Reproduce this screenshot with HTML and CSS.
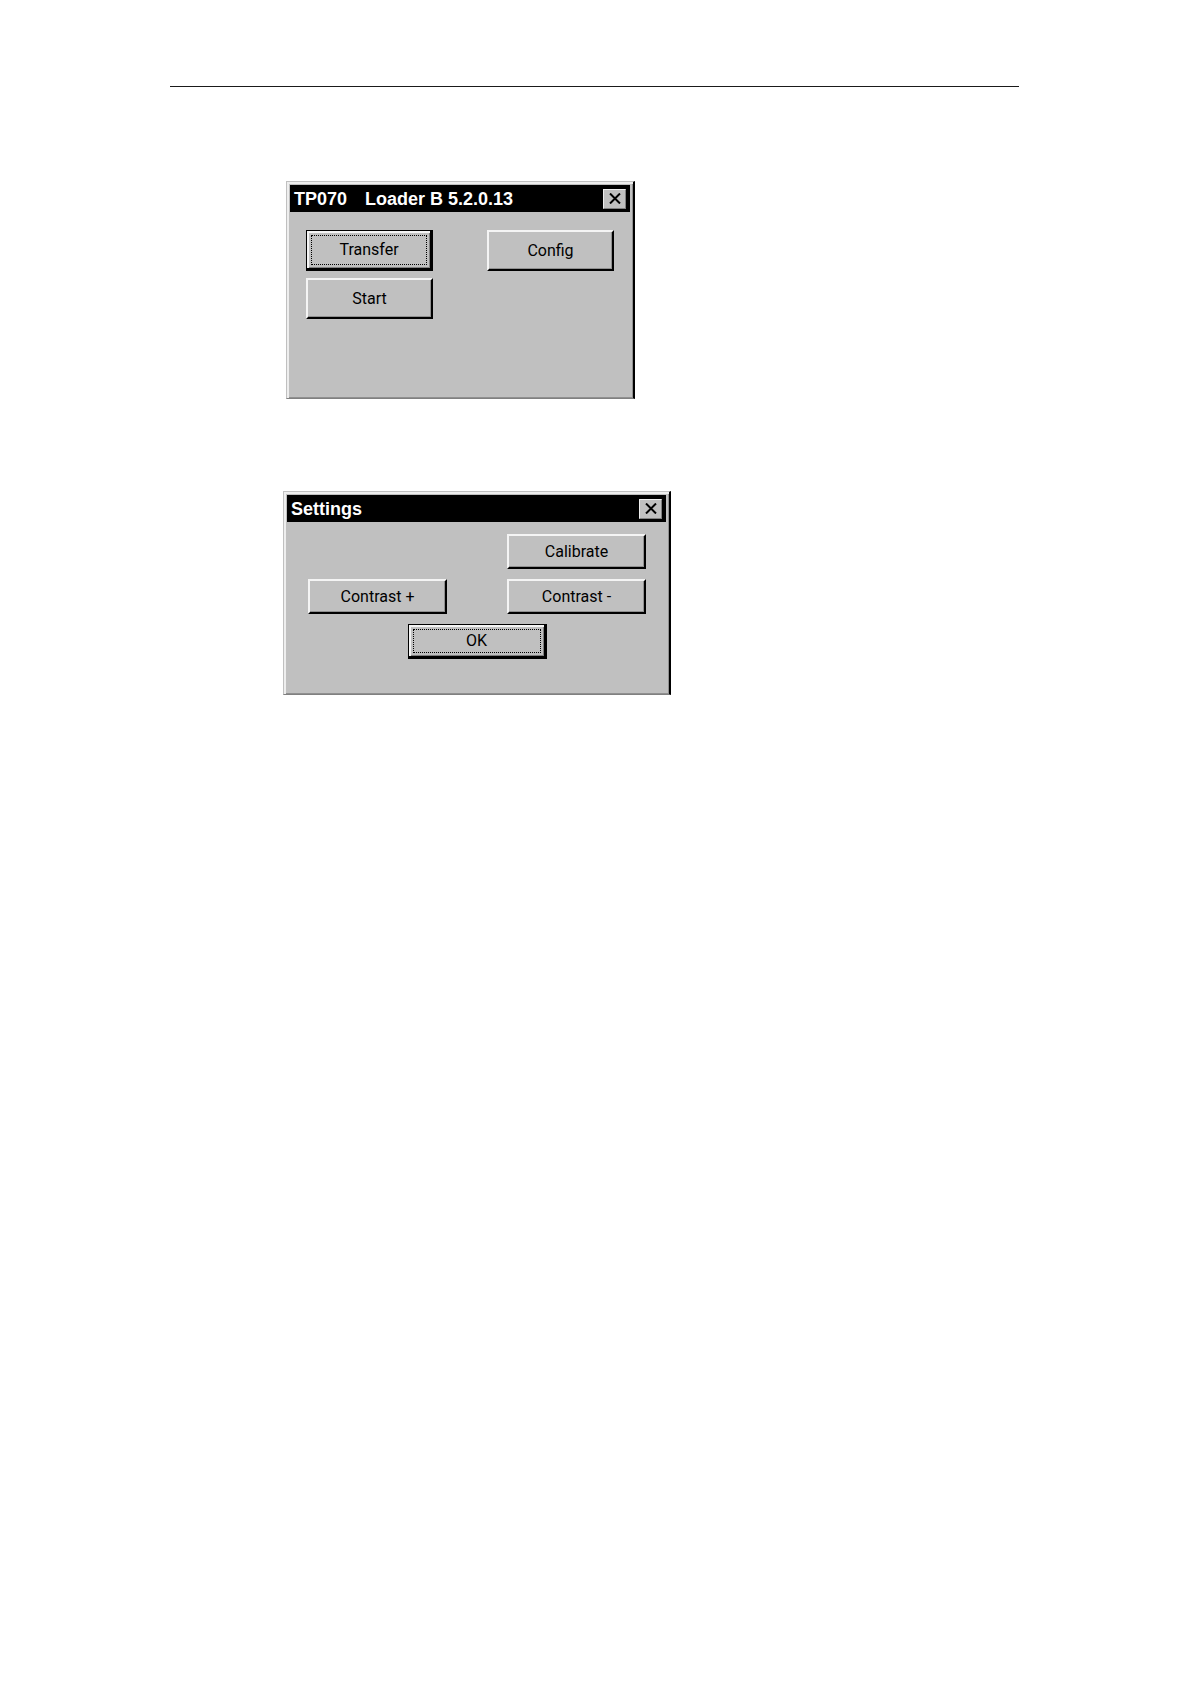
FILE: index.html
```html
<!DOCTYPE html>
<html lang="en">
<head>
  <meta charset="UTF-8">
  <meta name="viewport" content="width=device-width, initial-scale=1.0">
  <title>TP070 Loader</title>
  <link rel="stylesheet" href="styles.css">
</head>
<body>
  <hr class="page-rule">

  <main class="windows">
    <section class="window loader">
      <header class="title-bar">
        <h2><span>TP070</span> <span>Loader B 5.2.0.13</span></h2>
        <button class="close" type="button" aria-label="Close">
          <svg viewBox="0 0 12 11" width="12" height="11"><path d="M1 0.5L11 10.5M11 0.5L1 10.5"/></svg>
        </button>
      </header>
      <div class="window-body">
        <div class="row">
          <button class="btn default" type="button"><span>Transfer</span></button>
          <button class="btn" type="button">Config</button>
        </div>
        <div class="row">
          <button class="btn" type="button">Start</button>
        </div>
      </div>
    </section>

    <section class="window settings">
      <header class="title-bar">
        <h2>Settings</h2>
        <button class="close" type="button" aria-label="Close">
          <svg viewBox="0 0 12 11" width="12" height="11"><path d="M1 0.5L11 10.5M11 0.5L1 10.5"/></svg>
        </button>
      </header>
      <div class="window-body">
        <div class="row right">
          <button class="btn" type="button">Calibrate</button>
        </div>
        <div class="row">
          <button class="btn" type="button">Contrast +</button>
          <button class="btn" type="button">Contrast -</button>
        </div>
        <div class="row center">
          <button class="btn default" type="button"><span>OK</span></button>
        </div>
      </div>
    </section>
  </main>
</body>
</html>
```
FILE: styles.css
```css
body {
  margin: 0;
  padding: 86px 171px 0 170px;
  background-color: #fff;
  color: #000;
  font-family: "Liberation Sans", Arial, sans-serif;
}

.page-rule {
  height: 1px;
  margin: 0;
  border: none;
  background-color: #1a1a1a;
}

.windows {
  display: flex;
  flex-direction: column;
  gap: 92px;
  padding-top: 94px;
}

.window {
  box-sizing: border-box;
  width: 100%;
  background-color: #c0c0c0;
  border: 1px solid #c0c0c0;
  border-right: 2px solid #000;
  border-bottom-color: #808080;
  box-shadow: inset 2px 2px 0 #eee, inset -1px -1px 0 #909090;
}

.title-bar {
  display: flex;
  justify-content: space-between;
  align-items: center;
  height: 27px;
  padding: 0 4px;
  background-color: #000;
  color: #fff;
}

.title-bar h2 {
  display: flex;
  gap: 18px;
  margin: 0;
  font-size: 18px;
  line-height: 20px;
}

.close {
  display: flex;
  justify-content: center;
  align-items: center;
  width: 23px;
  height: 20px;
  padding: 0;
  background-color: #c0c0c0;
  border: 1px solid #eee;
  border-right-color: #808080;
  border-bottom-color: #808080;
}

.close svg {
  stroke: #000;
  stroke-width: 2;
  fill: none;
}

.row {
  display: flex;
  justify-content: space-between;
}

.right {
  justify-content: flex-end;
}

.center {
  justify-content: center;
}

.btn {
  box-sizing: border-box;
  padding: 0;
  background-color: #c0c0c0;
  border: 2px solid #f4f4f4;
  border-right-color: #000;
  border-bottom-color: #000;
  box-shadow: inset -1px -1px 0 #909090;
  color: #000;
  font-family: Roboto, "Liberation Sans", Arial, sans-serif;
  font-size: 16px;
  line-height: 20px;
}

/* default button: black frame, dotted focus box */
.default {
  display: flex;
  padding: 2px;
  border: 2px solid #000;
  border-width: 1px 3px 3px 1px;
  box-shadow: inset 2px 2px 0 #f4f4f4, inset -1px -1px 0 #808080;
}

.default span {
  flex: 1;
  display: flex;
  align-items: center;
  justify-content: center;
  align-self: stretch;
  margin: 2px 1px 1px 2px;
  border: 1px dotted #000;
}

.loader {
  max-width: 349px;
  margin-left: 116px;
  padding: 3px 3px 79px;
}

.loader .window-body {
  display: flex;
  flex-direction: column;
  gap: 7px;
  padding: 18px 16px 0;
}

.loader .btn {
  width: 127px;
  height: 41px;
}

.settings {
  max-width: 388px;
  margin-left: 113px;
  padding: 3px 3px 35px;
}

.settings .window-body {
  display: flex;
  flex-direction: column;
  gap: 10px;
  padding: 12px 20px 0 21px;
}

.settings .btn {
  width: 139px;
  height: 35px;
}
```
